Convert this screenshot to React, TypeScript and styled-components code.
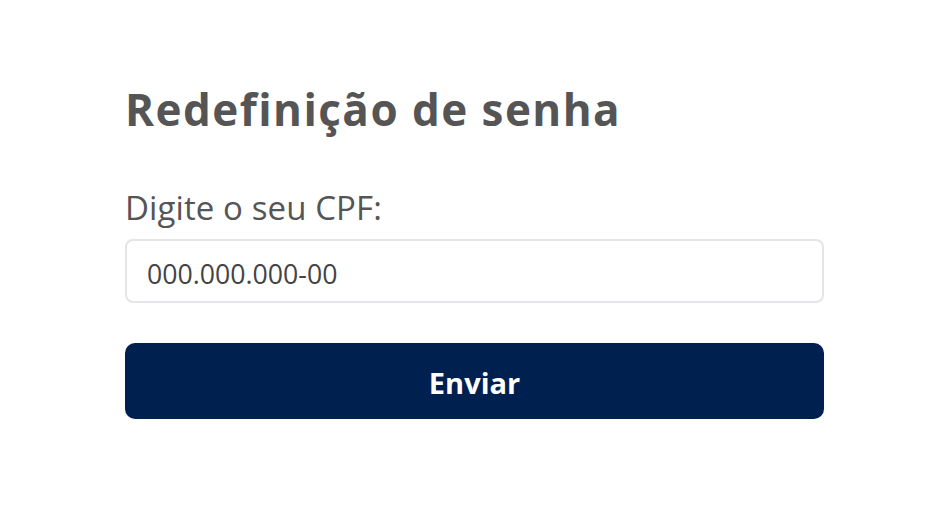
import styled, { createGlobalStyle } from 'styled-components';

const GlobalStyle = createGlobalStyle`
  html, body {
    margin: 0;
    padding: 0;
    background: #ffffff;
    font-family: "Open Sans", "Liberation Sans", sans-serif;
  }
`;

const Page = styled.div`
  width: 949px;
  height: 524px;
  display: flex;
  box-sizing: border-box;
  padding: 79px 0 0 125px;
`;

const Form = styled.form`
  width: 699px;
  display: flex;
  flex-direction: column;
`;

const Title = styled.h1`
  margin: 0;
  font-size: 44px;
  line-height: 60px;
  font-weight: 700;
  letter-spacing: 1.45px;
  color: #555555;
`;

const Label = styled.label`
  margin: 46px 0 0 0;
  font-size: 33px;
  line-height: 45px;
  letter-spacing: 0.1px;
  color: #555555;
`;

const Input = styled.input`
  margin-top: 9px;
  height: 64px;
  box-sizing: border-box;
  border: 2px solid #e3e5e8;
  border-radius: 8px;
  padding: 5px 20px 0 20px;
  font-family: inherit;
  font-size: 26.7px;
  color: #444444;
  outline: none;

  &::placeholder {
    color: #444444;
  }
`;

const Button = styled.button`
  margin-top: 40px;
  height: 76px;
  border: none;
  border-radius: 10px;
  padding-top: 4px;
  background: #00204f;
  color: #ffffff;
  font-family: inherit;
  font-size: 29px;
  font-weight: 700;
  cursor: pointer;
`;

export default function App() {
  return (
    <>
      <GlobalStyle />
      <Page>
        <Form onSubmit={e => e.preventDefault()}>
          <Title>Redefinição de senha</Title>
          <Label htmlFor="cpf">Digite o seu CPF:</Label>
          <Input id="cpf" placeholder="000.000.000-00" />
          <Button type="submit">Enviar</Button>
        </Form>
      </Page>
    </>
  );
}
